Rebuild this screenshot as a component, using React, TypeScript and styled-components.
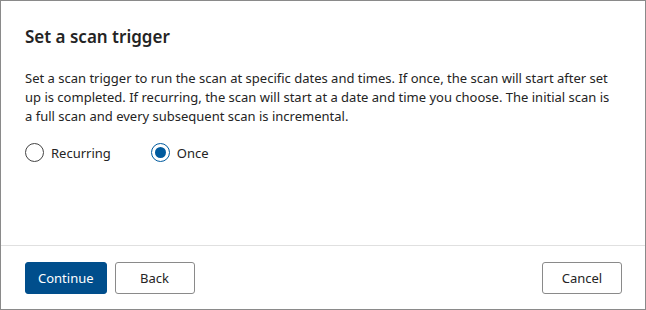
import React, { useState } from 'react';
import styled, { createGlobalStyle } from 'styled-components';

const GlobalStyle = createGlobalStyle`
  html, body {
    margin: 0;
    padding: 0;
    background: #ffffff;
  }
  body {
    font-family: "Noto Sans", "Open Sans", "Liberation Sans", sans-serif;
    color: #242424;
  }
`;

const Dialog = styled.div`
  box-sizing: border-box;
  width: 646px;
  height: 310px;
  border: 1px solid #8a8a8a;
  display: flex;
  flex-direction: column;
  background: #fff;
`;

const Body = styled.div`
  flex: 1;
  padding: 23px 24px 0 24px;
`;

const Title = styled.h2`
  margin: 0;
  font-size: 17px;
  font-weight: 600;
  line-height: 26px;
  color: #242424;
`;

const Description = styled.p`
  margin: 19px 0 0 0;
  max-width: 594px;
  font-size: 13px;
  line-height: 19px;
  color: #242424;
`;

const RadioGroup = styled.div`
  display: flex;
  gap: 40px;
  margin-top: 17px;
`;

const RadioLabel = styled.label`
  display: flex;
  align-items: center;
  gap: 7px;
  font-size: 13px;
  cursor: pointer;
`;

const Circle = styled.span<{ $checked: boolean }>`
  box-sizing: border-box;
  width: 19px;
  height: 19px;
  border-radius: 50%;
  border: 1px solid ${(p) => (p.$checked ? '#005a9e' : '#444')};
  display: flex;
  align-items: center;
  justify-content: center;

  &::after {
    content: '';
    width: 11px;
    height: 11px;
    border-radius: 50%;
    background: #005a9e;
    display: ${(p) => (p.$checked ? 'block' : 'none')};
  }
`;

const Footer = styled.div`
  border-top: 1px solid #e0e0e0;
  height: 64px;
  box-sizing: border-box;
  padding: 16px 23px 0 24px;
  display: flex;
  gap: 8px;
`;

const Button = styled.button<{ $primary?: boolean }>`
  box-sizing: border-box;
  height: 32px;
  padding: 0 12px 1px;
  min-width: 80px;
  border-radius: 3px;
  font-family: inherit;
  font-size: 13px;
  cursor: pointer;
  background: ${(p) => (p.$primary ? '#004e8c' : '#fff')};
  color: ${(p) => (p.$primary ? '#fff' : '#242424')};
  border: 1px solid ${(p) => (p.$primary ? '#004e8c' : '#8a8a8a')};
`;

const Spacer = styled.div`
  flex: 1;
`;

export default function App() {
  const [choice, setChoice] = useState<'recurring' | 'once'>('once');
  return (
    <>
      <GlobalStyle />
      <Dialog>
        <Body>
          <Title>Set a scan trigger</Title>
          <Description>
            Set a scan trigger to run the scan at specific dates and times. If once, the scan will
            start after set up is completed. If recurring, the scan will start at a date and time
            you choose. The initial scan is a full scan and every subsequent scan is incremental.
          </Description>
          <RadioGroup>
            <RadioLabel onClick={() => setChoice('recurring')}>
              <Circle $checked={choice === 'recurring'} />
              Recurring
            </RadioLabel>
            <RadioLabel onClick={() => setChoice('once')}>
              <Circle $checked={choice === 'once'} />
              Once
            </RadioLabel>
          </RadioGroup>
        </Body>
        <Footer>
          <Button $primary>Continue</Button>
          <Button>Back</Button>
          <Spacer />
          <Button>Cancel</Button>
        </Footer>
      </Dialog>
    </>
  );
}
